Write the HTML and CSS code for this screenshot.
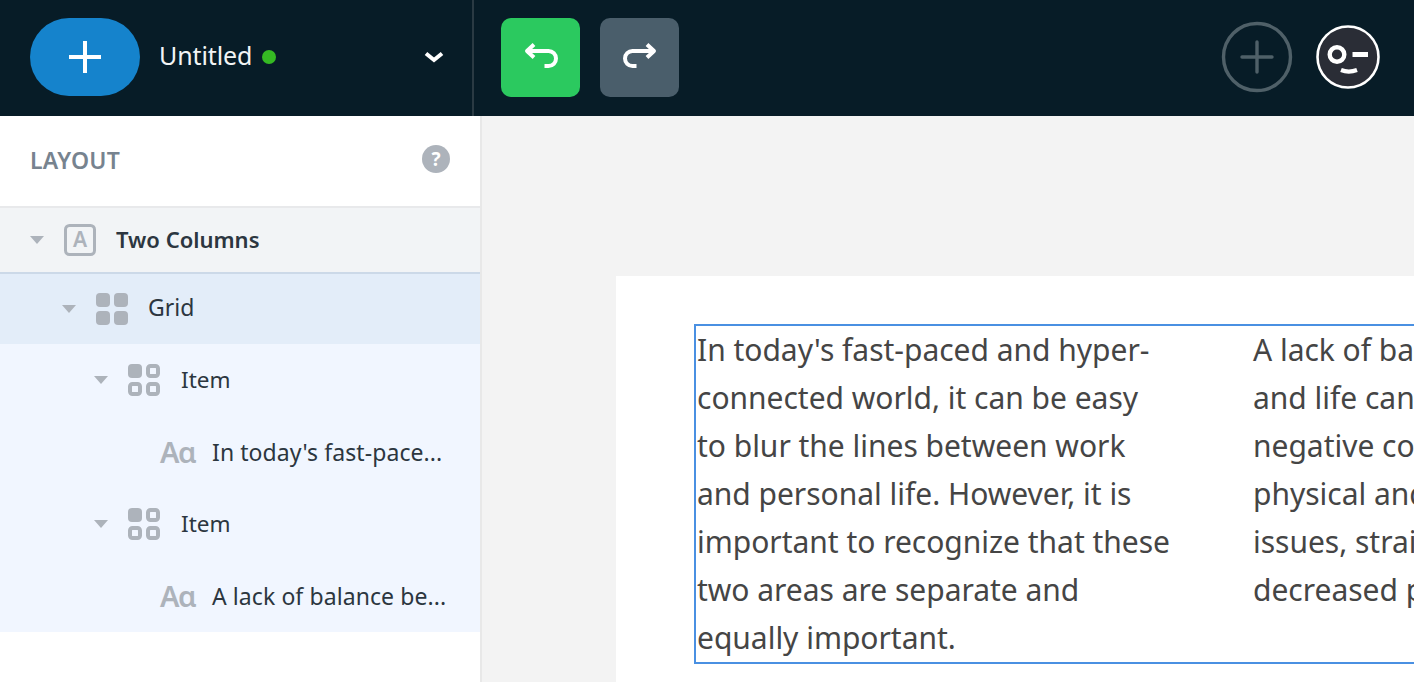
FILE: index.html
```html
<!DOCTYPE html>
<html lang="en">
<head>
<meta charset="utf-8">
<title>Untitled</title>
<link rel="stylesheet" href="styles.css">
</head>
<body>
<header class="topbar">
  <div class="doc">
    <button class="add-pill" aria-label="Add">
      <svg width="34" height="34" viewBox="0 0 34 34"><path d="M17 1v32M1 17h32" stroke="#fff" stroke-width="4" fill="none"/></svg>
    </button>
    <span class="doc-title">Untitled</span>
    <span class="status-dot"></span>
    <svg class="chevron" width="20" height="12" viewBox="0 0 20 12"><path d="M2 2.500l8 6.500 8-6.500" stroke="#fff" stroke-width="4" fill="none"/></svg>
  </div>
  <div class="history">
    <button class="hist-btn undo" aria-label="Undo">
      <svg width="34" height="28" viewBox="0 0 34 28"><path d="M10 1.500L3 8L10 14.500M3 8H24.500A7.500 7.500 0 0 1 24.500 23H20.500" stroke="#fff" stroke-width="4" stroke-linejoin="round" fill="none"/></svg>
    </button>
    <button class="hist-btn redo" aria-label="Redo">
      <svg width="34" height="28" viewBox="0 0 34 28"><path d="M24 1.500L31 8L24 14.500M31 8H9.500A7.500 7.500 0 0 0 9.500 23H13.500" stroke="#fff" stroke-width="4" stroke-linejoin="round" fill="none"/></svg>
    </button>
  </div>
  <div class="actions">
    <svg width="72" height="72" viewBox="0 0 72 72"><circle cx="36" cy="36" r="33.500" stroke="#4f6068" stroke-width="3.400" fill="none"/><path d="M36 21v30M21 36h30" stroke="#4f6068" stroke-width="3.400" stroke-linecap="round" fill="none"/></svg>
    <svg class="avatar" width="64" height="64" viewBox="0 0 64 64"><circle cx="32" cy="32" r="30.500" fill="#2a2d36" stroke="#fff" stroke-width="2.600"/><circle cx="21" cy="29.500" r="7.300" fill="none" stroke="#fff" stroke-width="4.400"/><path d="M36.500 29.500h15.500" stroke="#fff" stroke-width="5" fill="none"/><path d="M25 45c5 2 10.500 2 16 0" stroke="#fff" stroke-width="4.200" fill="none"/></svg>
  </div>
</header>
<div class="workspace">
  <aside class="sidebar">
    <div class="side-head">
      <span class="side-title">LAYOUT</span>
      <span class="help">?</span>
    </div>
    <div class="row row-root">
      <span class="caret"></span>
      <svg width="32" height="32" viewBox="0 0 32 32"><rect x="1.500" y="1.500" width="29" height="29" rx="4" fill="none" stroke="#adb3bb" stroke-width="3"/><text x="16" y="23" text-anchor="middle" class="icon-a">A</text></svg>
      <span class="row-bold">Two Columns</span>
    </div>
    <div class="row row-grid">
      <span class="caret"></span>
      <svg width="32" height="32" viewBox="0 0 32 32" fill="#adb3bb"><rect width="14" height="14" rx="4"/><rect x="18" width="14" height="14" rx="4"/><rect y="18" width="14" height="14" rx="4"/><rect x="18" y="18" width="14" height="14" rx="4"/></svg>
      <span class="row-label">Grid</span>
    </div>
    <div class="tree-children">
      <div class="row row-item">
        <span class="caret"></span>
        <svg width="32" height="32" viewBox="0 0 32 32"><rect width="14" height="14" rx="4" fill="#adb3bb"/><rect x="20" y="2" width="10" height="10" rx="2.500" fill="none" stroke="#adb3bb" stroke-width="4"/><rect x="2" y="20" width="10" height="10" rx="2.500" fill="none" stroke="#adb3bb" stroke-width="4"/><rect x="20" y="20" width="10" height="10" rx="2.500" fill="none" stroke="#adb3bb" stroke-width="4"/></svg>
        <span class="item-label">Item</span>
      </div>
      <div class="row row-text">
        <span class="aa">Aɑ</span>
        <span class="row-small">In today's fast-pace...</span>
      </div>
      <div class="row row-item">
        <span class="caret"></span>
        <svg width="32" height="32" viewBox="0 0 32 32"><rect width="14" height="14" rx="4" fill="#adb3bb"/><rect x="20" y="2" width="10" height="10" rx="2.500" fill="none" stroke="#adb3bb" stroke-width="4"/><rect x="2" y="20" width="10" height="10" rx="2.500" fill="none" stroke="#adb3bb" stroke-width="4"/><rect x="20" y="20" width="10" height="10" rx="2.500" fill="none" stroke="#adb3bb" stroke-width="4"/></svg>
        <span class="item-label">Item</span>
      </div>
      <div class="row row-text">
        <span class="aa">Aɑ</span>
        <span class="row-small">A lack of balance be...</span>
      </div>
    </div>
  </aside>
  <main class="stage">
    <section class="page">
      <div class="selected-grid">
        <p class="col col-a">In today's fast-paced and hyper-<br>connected world, it can be easy<br>to blur the lines between work<br>and personal life. However, it is<br>important to recognize that these<br>two areas are separate and<br>equally important.</p>
        <p class="col col-b">A lack of balance between work<br>and life can have a number of<br>negative consequences, including<br>physical and mental health<br>issues, strained relationships, and<br>decreased productivity.</p>
      </div>
    </section>
  </main>
</div>
</body>
</html>
```
FILE: styles.css
```css
* { box-sizing: border-box; }
html, body { margin: 0; height: 100%; overflow: hidden; }
body { font-family: "Noto Sans", "Open Sans", sans-serif; color: #2c3640; background: #fff; }
button { border: 0; padding: 0; display: flex; align-items: center; justify-content: center; }

.topbar { height: 116px; background: #071c27; display: flex; align-items: center; }
.doc { width: 474px; height: 116px; border-right: 2px solid #2a3a43; display: flex; align-items: center; padding: 0 28px 2px 30px; }
.add-pill { width: 110px; height: 78px; border-radius: 39px; background: #1583cc; flex: none; }
.doc-title { margin-left: 19px; margin-top: -4px; font-size: 25px; color: #f2f4f5; letter-spacing: -0.1px; }
.status-dot { width: 14px; height: 14px; border-radius: 50%; background: #35b923; margin-left: 10px; flex: none; }
.chevron { margin-left: auto; }

.history { display: flex; gap: 20px; padding: 0 0 2px 27px; }
.hist-btn { width: 79px; height: 79px; border-radius: 10px; }
.undo { background: #2bc95f; }
.redo { background: #4a5e6b; }

.actions { margin-left: auto; display: flex; align-items: center; gap: 23px; padding: 0 34px 2px 0; }

.workspace { display: flex; height: 566px; }
.sidebar { width: 482px; flex: none; border-right: 2px solid #e8e8e8; background: #fff; }
.side-head { height: 92px; border-bottom: 2px solid #e8e9eb; display: flex; align-items: center; justify-content: space-between; padding: 0 30px; }
.side-title { font-size: 23px; font-weight: 600; color: #77838f; letter-spacing: 0.3px; margin-top: -2px; }
.help { width: 28px; height: 28px; border-radius: 50%; background: #adb3bb; color: #fff; font-size: 19px; font-weight: 700; display: flex; align-items: center; justify-content: center; margin-top: -5px; }

.row { display: flex; align-items: center; font-size: 23px; }
.row svg { flex: none; }
.caret { width: 0; height: 0; border-left: 7px solid transparent; border-right: 7px solid transparent; border-top: 8px solid #adb3bb; flex: none; }
.row-root { height: 66px; padding-left: 30px; gap: 20px; background: #f2f4f6; border-bottom: 2px solid #ccd9e8; }
.row-bold { font-weight: 600; font-size: 22px; color: #2c3640; margin-top: -2px; }
.row-grid { height: 70px; padding-left: 62px; gap: 20px; background: #e3edf9; }
.row-label { margin-top: -4px; }
.item-label { margin-top: -2px; margin-left: 1px; font-size: 22.500px; }
.tree-children { background: #f1f6ff; }
.row-item { height: 72px; padding-left: 94px; gap: 20px; }
.row-text { height: 72px; padding-left: 160px; gap: 20px; }
.row-small { font-size: 23px; letter-spacing: 0.08px; white-space: nowrap; margin-top: -1px; }
.aa { font-family: "Noto Sans", sans-serif; font-size: 29px; font-weight: 600; color: #adb3bb; width: 32px; letter-spacing: -1.500px; flex: none; margin-top: -2px; }
.icon-a { font-family: "Noto Sans", sans-serif; font-size: 21px; font-weight: 600; fill: #adb3bb; }

.stage { flex: 1; min-width: 0; background: #f3f3f3; padding: 160px 0 0 134px; overflow: hidden; }
.page { background: #fff; width: 1200px; height: 500px; padding: 48px 0 0 78px; }
.selected-grid { width: 1000px; height: 340px; border: 2px solid #4a90e2; display: flex; gap: 84px; }
.col { margin: 0; width: 472px; flex: none; font-size: 30px; line-height: 48px; color: #454545; letter-spacing: -0.02px; white-space: nowrap; padding-left: 1px; }
```
